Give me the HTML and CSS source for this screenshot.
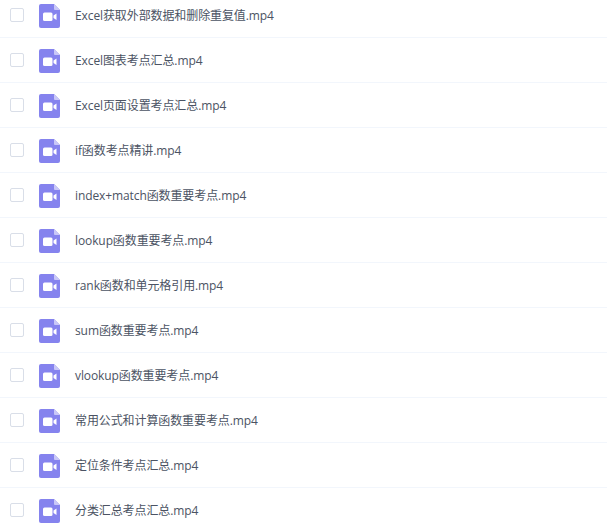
FILE: index.html
```html
<!doctype html>
<html>
<head>
<meta charset="utf-8">
<title>文件列表</title>
<link rel="stylesheet" href="styles.css">
</head>
<body>
<svg class="defs" width="0" height="0">
	<symbol id="video" viewBox="0 0 21 24">
		<path d="M2 0H15L21 6V22a2 2 0 0 1-2 2H2a2 2 0 0 1-2-2V2a2 2 0 0 1 2-2z" fill="#8583ee"/>
		<path d="M15 0L21 6H16a1 1 0 0 1-1-1z" fill="#c9c8f7"/>
		<rect x="4" y="8.5" width="9.5" height="8.5" rx="1.5" fill="#fff"/>
		<path d="M14.5 11.5L17.5 9.5V16L14.5 14z" fill="#fff"/>
	</symbol>
</svg>
<ul class="file-list">
	<li class="file-row"><span class="check"></span><svg class="file-icon"><use href="#video"/></svg><span class="file-name">Excel获取外部数据和删除重复值.mp4</span></li>
	<li class="file-row"><span class="check"></span><svg class="file-icon"><use href="#video"/></svg><span class="file-name">Excel图表考点汇总.mp4</span></li>
	<li class="file-row"><span class="check"></span><svg class="file-icon"><use href="#video"/></svg><span class="file-name">Excel页面设置考点汇总.mp4</span></li>
	<li class="file-row"><span class="check"></span><svg class="file-icon"><use href="#video"/></svg><span class="file-name">if函数考点精讲.mp4</span></li>
	<li class="file-row"><span class="check"></span><svg class="file-icon"><use href="#video"/></svg><span class="file-name">index+match函数重要考点.mp4</span></li>
	<li class="file-row"><span class="check"></span><svg class="file-icon"><use href="#video"/></svg><span class="file-name">lookup函数重要考点.mp4</span></li>
	<li class="file-row"><span class="check"></span><svg class="file-icon"><use href="#video"/></svg><span class="file-name">rank函数和单元格引用.mp4</span></li>
	<li class="file-row"><span class="check"></span><svg class="file-icon"><use href="#video"/></svg><span class="file-name">sum函数重要考点.mp4</span></li>
	<li class="file-row"><span class="check"></span><svg class="file-icon"><use href="#video"/></svg><span class="file-name">vlookup函数重要考点.mp4</span></li>
	<li class="file-row"><span class="check"></span><svg class="file-icon"><use href="#video"/></svg><span class="file-name">常用公式和计算函数重要考点.mp4</span></li>
	<li class="file-row"><span class="check"></span><svg class="file-icon"><use href="#video"/></svg><span class="file-name">定位条件考点汇总.mp4</span></li>
	<li class="file-row"><span class="check"></span><svg class="file-icon"><use href="#video"/></svg><span class="file-name">分类汇总考点汇总.mp4</span></li>
</ul>
</body>
</html>
```

FILE: styles.css
```css
*{ margin:0; padding:0; list-style:none; box-sizing:border-box;}
html,body{ height:100%; overflow:hidden;}
body{ background:#fff; font-family:"Open Sans","Noto Sans CJK SC",sans-serif; font-size:12px; letter-spacing:-.1px; color:#4b5363;}
.defs{ display:block; height:0;}

.file-list{ margin-top:-7px;}
.file-row{ display:flex; align-items:center; height:45px; padding-left:10px; border-bottom:1px solid #f2f6fc;}
.check{ flex:none; width:14px; height:14px; border:1px solid #d9dee8; border-radius:2px; background:#fff;}
.file-icon{ flex:none; width:21px; height:24px; margin:2px 0 0 15px;}
.file-name{ margin:2px 0 0 15px; line-height:16px;}
```
